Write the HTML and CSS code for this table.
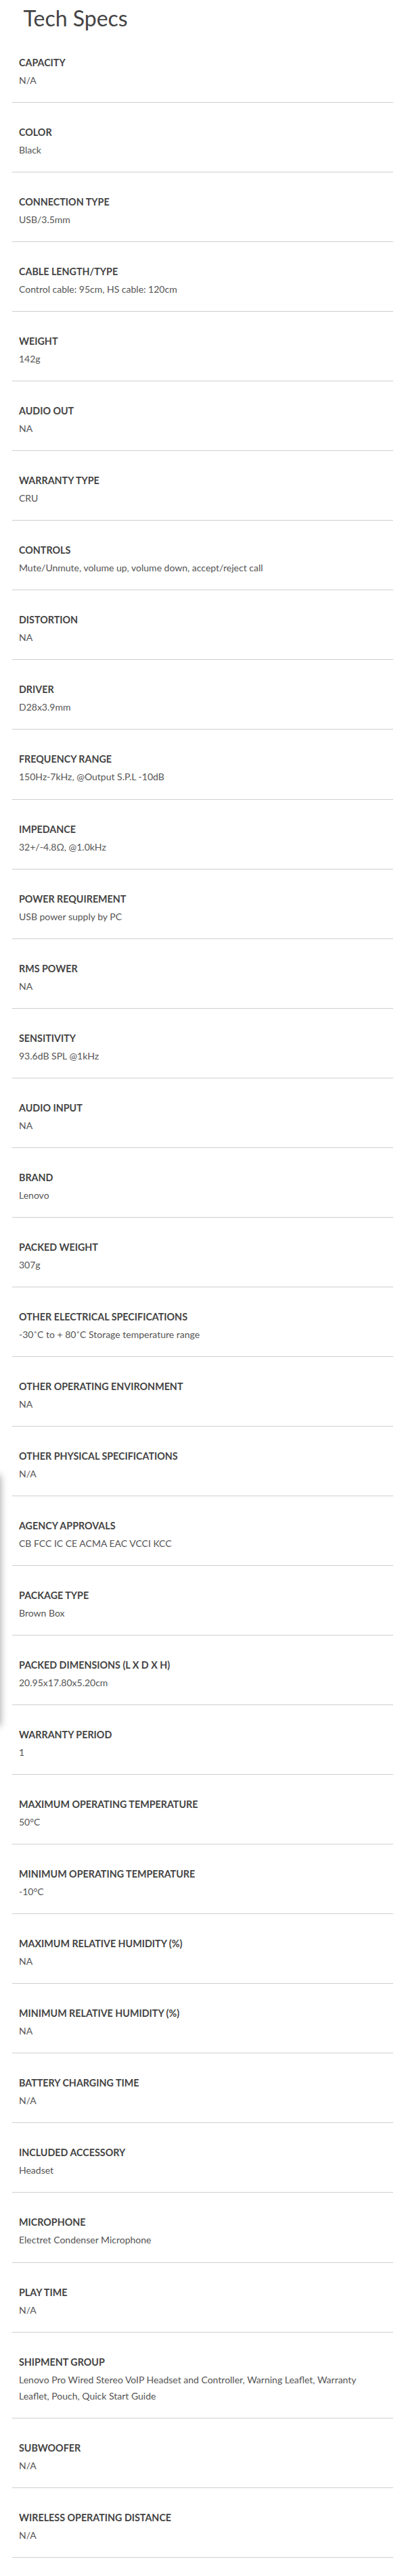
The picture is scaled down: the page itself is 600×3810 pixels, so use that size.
FILE: index.html
```html
<!DOCTYPE html>
<html lang="en">
<head>
<meta charset="utf-8">
<title>Tech Specs</title>
<link rel="stylesheet" href="styles.css">
</head>
<body>
<div class="page">
  <h1 class="title">Tech Specs</h1>
  <ul class="specs">
    <li class="spec"><div class="label">CAPACITY</div><div class="value">N/A</div></li>
    <li class="spec"><div class="label">COLOR</div><div class="value">Black</div></li>
    <li class="spec"><div class="label">CONNECTION TYPE</div><div class="value">USB/3.5mm</div></li>
    <li class="spec"><div class="label">CABLE LENGTH/TYPE</div><div class="value">Control cable: 95cm, HS cable: 120cm</div></li>
    <li class="spec"><div class="label">WEIGHT</div><div class="value">142g</div></li>
    <li class="spec"><div class="label">AUDIO OUT</div><div class="value">NA</div></li>
    <li class="spec"><div class="label">WARRANTY TYPE</div><div class="value">CRU</div></li>
    <li class="spec"><div class="label">CONTROLS</div><div class="value">Mute/Unmute, volume up, volume down, accept/reject call</div></li>
    <li class="spec"><div class="label">DISTORTION</div><div class="value">NA</div></li>
    <li class="spec"><div class="label">DRIVER</div><div class="value">D28x3.9mm</div></li>
    <li class="spec"><div class="label">FREQUENCY RANGE</div><div class="value">150Hz-7kHz, @Output S.P.L -10dB</div></li>
    <li class="spec"><div class="label">IMPEDANCE</div><div class="value">32+/-4.8Ω, @1.0kHz</div></li>
    <li class="spec"><div class="label">POWER REQUIREMENT</div><div class="value">USB power supply by PC</div></li>
    <li class="spec"><div class="label">RMS POWER</div><div class="value">NA</div></li>
    <li class="spec"><div class="label">SENSITIVITY</div><div class="value">93.6dB SPL @1kHz</div></li>
    <li class="spec"><div class="label">AUDIO INPUT</div><div class="value">NA</div></li>
    <li class="spec"><div class="label">BRAND</div><div class="value">Lenovo</div></li>
    <li class="spec"><div class="label">PACKED WEIGHT</div><div class="value">307g</div></li>
    <li class="spec"><div class="label">OTHER ELECTRICAL SPECIFICATIONS</div><div class="value">-30˚C to + 80˚C Storage temperature range</div></li>
    <li class="spec"><div class="label">OTHER OPERATING ENVIRONMENT</div><div class="value">NA</div></li>
    <li class="spec"><div class="label">OTHER PHYSICAL SPECIFICATIONS</div><div class="value">N/A</div></li>
    <li class="spec"><div class="label">AGENCY APPROVALS</div><div class="value">CB FCC IC CE ACMA EAC VCCI KCC</div></li>
    <li class="spec"><div class="label">PACKAGE TYPE</div><div class="value">Brown Box</div></li>
    <li class="spec"><div class="label">PACKED DIMENSIONS (L X D X H)</div><div class="value">20.95x17.80x5.20cm</div></li>
    <li class="spec"><div class="label">WARRANTY PERIOD</div><div class="value">1</div></li>
    <li class="spec"><div class="label">MAXIMUM OPERATING TEMPERATURE</div><div class="value">50°C</div></li>
    <li class="spec"><div class="label">MINIMUM OPERATING TEMPERATURE</div><div class="value">-10°C</div></li>
    <li class="spec"><div class="label">MAXIMUM RELATIVE HUMIDITY (%)</div><div class="value">NA</div></li>
    <li class="spec"><div class="label">MINIMUM RELATIVE HUMIDITY (%)</div><div class="value">NA</div></li>
    <li class="spec"><div class="label">BATTERY CHARGING TIME</div><div class="value">N/A</div></li>
    <li class="spec"><div class="label">INCLUDED ACCESSORY</div><div class="value">Headset</div></li>
    <li class="spec"><div class="label">MICROPHONE</div><div class="value">Electret Condenser Microphone</div></li>
    <li class="spec"><div class="label">PLAY TIME</div><div class="value">N/A</div></li>
    <li class="spec"><div class="label">SHIPMENT GROUP</div><div class="value">Lenovo Pro Wired Stereo VoIP Headset and Controller, Warning Leaflet, Warranty Leaflet, Pouch, Quick Start Guide</div></li>
    <li class="spec"><div class="label">SUBWOOFER</div><div class="value">N/A</div></li>
    <li class="spec"><div class="label">WIRELESS OPERATING DISTANCE</div><div class="value">N/A</div></li>
  </ul>
  <div class="drawer-edge"></div>
</div>
</body>
</html>
```
FILE: styles.css
```css
* { box-sizing: border-box; }
html, body {
  margin: 0;
  padding: 0;
  background: #fff;
}
body {
  font-family: Lato, "Open Sans", Arial, sans-serif;
  color: #4a4a4a;
  overflow-x: hidden;
}
.page {
  position: relative;
  width: 600px;
}
.title {
  margin: 0;
  padding: 7px 0 0 34.5px;
  font-size: 32px;
  line-height: 40px;
  font-weight: 400;
  color: #444;
}
.specs {
  list-style: none;
  margin: 2px 0 0 18px;
  padding: 0;
  width: 563px;
}
.spec {
  padding: 33px 10px 20.05px 10px;
  border-bottom: 1px solid #cfcfcf;
}
.label {
  font-size: 14.3px;
  line-height: 22px;
  font-weight: 700;
  color: #444;
  margin-bottom: 3px;
}
.value {
  font-size: 14px;
  line-height: 24px;
  font-weight: 400;
  color: #555;
}
.drawer-edge {
  position: absolute;
  left: -20px;
  top: 2182px;
  width: 20px;
  height: 370px;
  background: #fff;
  box-shadow: 0 0 12px rgba(0, 0, 0, 0.4);
}
```
